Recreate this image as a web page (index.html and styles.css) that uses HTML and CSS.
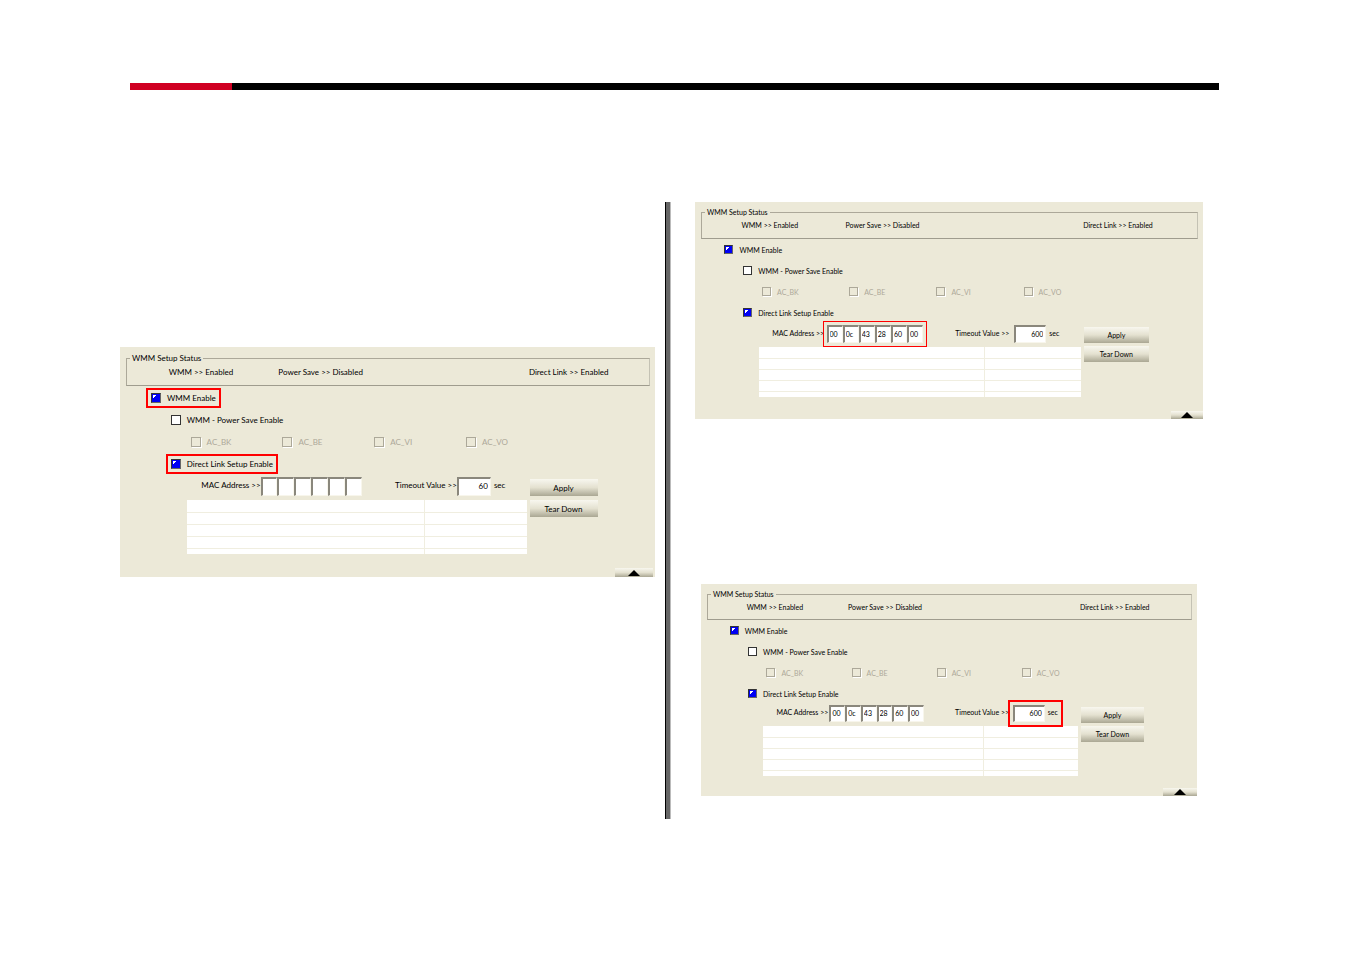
FILE: index.html
```
<!DOCTYPE html>
<html lang="en">
<head>
    <meta charset="UTF-8">
    <meta name="viewport" content="width=device-width, initial-scale=1.0">
    <title>WMM Setup</title>
    <link rel="stylesheet" href="styles.css">
</head>
<body>

    <header class="page-rule"></header>

    <main class="columns">

      <!-- Left column -->
      <section class="column column-left">
        <form class="panel panel-large">
          <fieldset class="status">
            <legend>WMM Setup Status</legend>
            <div class="status-row">
              <span>WMM &gt;&gt; Enabled</span>
              <span>Power Save &gt;&gt; Disabled</span>
              <span>Direct Link &gt;&gt; Enabled</span>
            </div>
          </fieldset>

          <div class="row level-1"><label class="check highlight"><input type="checkbox" checked>WMM Enable</label></div>
          <div class="row level-2"><label class="check"><input type="checkbox">WMM - Power Save Enable</label></div>
          <div class="row level-3">
            <label class="check"><input type="checkbox" disabled>AC_BK</label>
            <label class="check"><input type="checkbox" disabled>AC_BE</label>
            <label class="check"><input type="checkbox" disabled>AC_VI</label>
            <label class="check"><input type="checkbox" disabled>AC_VO</label>
          </div>
          <div class="row level-2"><label class="check highlight"><input type="checkbox" checked>Direct Link Setup Enable</label></div>

          <div class="direct-link">
            <div class="link-main">
              <div class="link-fields">
                <label for="mac-a">MAC Address &gt;&gt;</label>
                <div class="mac">
                  <input type="text" id="mac-a" maxlength="2">
                  <input type="text" aria-label="MAC byte 2" maxlength="2">
                  <input type="text" aria-label="MAC byte 3" maxlength="2">
                  <input type="text" aria-label="MAC byte 4" maxlength="2">
                  <input type="text" aria-label="MAC byte 5" maxlength="2">
                  <input type="text" aria-label="MAC byte 6" maxlength="2">
                </div>
                <label for="timeout-a">Timeout Value &gt;&gt;</label>
                <div class="timeout"><input type="text" id="timeout-a" value="60"><span>sec</span></div>
              </div>
              <table class="links">
                <tr><td></td><td></td></tr>
                <tr><td></td><td></td></tr>
                <tr><td></td><td></td></tr>
                <tr><td></td><td></td></tr>
                <tr><td></td><td></td></tr>
              </table>
            </div>
            <div class="actions">
              <button type="button">Apply</button>
              <button type="button">Tear Down</button>
            </div>
          </div>

          <button type="button" class="collapse" aria-label="Collapse"><svg width="12" height="6" viewBox="0 0 12 6"><path d="M6 0l6 6H0z"/></svg></button>
        </form>
      </section>

      <div class="divider"></div>

      <!-- Right column -->
      <section class="column column-right">
        <form class="panel panel-medium">
          <fieldset class="status">
            <legend>WMM Setup Status</legend>
            <div class="status-row">
              <span>WMM &gt;&gt; Enabled</span>
              <span>Power Save &gt;&gt; Disabled</span>
              <span>Direct Link &gt;&gt; Enabled</span>
            </div>
          </fieldset>

          <div class="row level-1"><label class="check"><input type="checkbox" checked>WMM Enable</label></div>
          <div class="row level-2"><label class="check"><input type="checkbox">WMM - Power Save Enable</label></div>
          <div class="row level-3">
            <label class="check"><input type="checkbox" disabled>AC_BK</label>
            <label class="check"><input type="checkbox" disabled>AC_BE</label>
            <label class="check"><input type="checkbox" disabled>AC_VI</label>
            <label class="check"><input type="checkbox" disabled>AC_VO</label>
          </div>
          <div class="row level-2"><label class="check"><input type="checkbox" checked>Direct Link Setup Enable</label></div>

          <div class="direct-link">
            <div class="link-main">
              <div class="link-fields">
                <label for="mac-b">MAC Address &gt;&gt;</label>
                <div class="mac highlight">
                  <input type="text" id="mac-b" maxlength="2" value="00">
                  <input type="text" aria-label="MAC byte 2" maxlength="2" value="0c">
                  <input type="text" aria-label="MAC byte 3" maxlength="2" value="43">
                  <input type="text" aria-label="MAC byte 4" maxlength="2" value="28">
                  <input type="text" aria-label="MAC byte 5" maxlength="2" value="60">
                  <input type="text" aria-label="MAC byte 6" maxlength="2" value="00">
                </div>
                <label for="timeout-b">Timeout Value &gt;&gt;</label>
                <div class="timeout"><input type="text" id="timeout-b" value="600"><span>sec</span></div>
              </div>
              <table class="links">
                <tr><td></td><td></td></tr>
                <tr><td></td><td></td></tr>
                <tr><td></td><td></td></tr>
                <tr><td></td><td></td></tr>
                <tr><td></td><td></td></tr>
              </table>
            </div>
            <div class="actions">
              <button type="button">Apply</button>
              <button type="button">Tear Down</button>
            </div>
          </div>

          <button type="button" class="collapse" aria-label="Collapse"><svg width="12" height="6" viewBox="0 0 12 6"><path d="M6 0l6 6H0z"/></svg></button>
        </form>

        <form class="panel panel-small">
          <fieldset class="status">
            <legend>WMM Setup Status</legend>
            <div class="status-row">
              <span>WMM &gt;&gt; Enabled</span>
              <span>Power Save &gt;&gt; Disabled</span>
              <span>Direct Link &gt;&gt; Enabled</span>
            </div>
          </fieldset>

          <div class="row level-1"><label class="check"><input type="checkbox" checked>WMM Enable</label></div>
          <div class="row level-2"><label class="check"><input type="checkbox">WMM - Power Save Enable</label></div>
          <div class="row level-3">
            <label class="check"><input type="checkbox" disabled>AC_BK</label>
            <label class="check"><input type="checkbox" disabled>AC_BE</label>
            <label class="check"><input type="checkbox" disabled>AC_VI</label>
            <label class="check"><input type="checkbox" disabled>AC_VO</label>
          </div>
          <div class="row level-2"><label class="check"><input type="checkbox" checked>Direct Link Setup Enable</label></div>

          <div class="direct-link">
            <div class="link-main">
              <div class="link-fields">
                <label for="mac-c">MAC Address &gt;&gt;</label>
                <div class="mac">
                  <input type="text" id="mac-c" maxlength="2" value="00">
                  <input type="text" aria-label="MAC byte 2" maxlength="2" value="0c">
                  <input type="text" aria-label="MAC byte 3" maxlength="2" value="43">
                  <input type="text" aria-label="MAC byte 4" maxlength="2" value="28">
                  <input type="text" aria-label="MAC byte 5" maxlength="2" value="60">
                  <input type="text" aria-label="MAC byte 6" maxlength="2" value="00">
                </div>
                <label for="timeout-c">Timeout Value &gt;&gt;</label>
                <div class="timeout highlight"><input type="text" id="timeout-c" value="600"><span>sec</span></div>
              </div>
              <table class="links">
                <tr><td></td><td></td></tr>
                <tr><td></td><td></td></tr>
                <tr><td></td><td></td></tr>
                <tr><td></td><td></td></tr>
                <tr><td></td><td></td></tr>
              </table>
            </div>
            <div class="actions">
              <button type="button">Apply</button>
              <button type="button">Tear Down</button>
            </div>
          </div>

          <button type="button" class="collapse" aria-label="Collapse"><svg width="12" height="6" viewBox="0 0 12 6"><path d="M6 0l6 6H0z"/></svg></button>
        </form>
      </section>

    </main>

</body>
</html>
```

FILE: styles.css
```
* {
  box-sizing: border-box;
}

body {
  margin: 0;
  padding: 83px 0 0;
  background-color: white;
  color: black;
  font-family: Lato, "Liberation Sans", sans-serif;
}

.page-rule {
  height: 7px;
  margin: 0 131px 0 130px;
  background: linear-gradient(to right, #d00022 102px, black 102px);
}

.columns {
  display: grid;
  grid-template-columns: 535fr 40px 508fr;
  margin: 112px 147px 0 120px;
}

.column-left {
  padding-top: 145px;
}

.column-right {
  padding-bottom: 23px;
}

.divider {
  width: 6px;
  margin-left: 10px;
  background-color: #666;
  border-left: 1px solid black;
  border-right: 1px solid #bbb;
}

/* Panels: same form at three sizes */
.panel {
  background-color: #ece9d8;
  padding: 5px 0 0;
  font-size: 7px;
  line-height: 10px;
  white-space: nowrap;
}

.panel-large {
  --status: 18px;
  --after-status: 1px;
  --row: 22px;
  --box: 10px;
  --lead: 2px;
  --field: 19px;
  --time: 34px;
  --button: 17px;
  --button-gap: 4px;
  --line: 12px;
  --foot: 14px;
  --collapse: 38px;
  --mark: 2px;
  padding-top: 6px;
  font-size: 8px;
}

.panel-medium {
  --status: 17px;
  --after-status: 0;
  --row: 21px;
  --box: 9px;
  --lead: 2px;
  --field: 18px;
  --time: 32px;
  --button: 16px;
  --button-gap: 3px;
  --line: 11px;
  --foot: 14px;
  --collapse: 32px;
  --mark: 1px;
}

.panel-small {
  --status: 16px;
  --after-status: 0;
  --row: 21px;
  --box: 9px;
  --lead: 1px;
  --field: 17px;
  --time: 32px;
  --button: 16px;
  --button-gap: 3px;
  --line: 11px;
  --foot: 12px;
  --collapse: 34px;
  --mark: 2px;
  margin: 165px 6px 0;
}

.status {
  min-width: 0;
  margin: 0 5px var(--after-status) 6px;
  padding: 0 0 4px;
  border: 1px solid #aca899;
  border-right-color: #c4c2b4;
  border-bottom-color: #9f9c8e;
}

.status legend {
  margin-left: 3px;
  padding: 0 2px;
}

.status-row {
  display: grid;
  grid-template-columns: 21fr 48fr 23fr;
  margin-left: 8%;
  line-height: var(--status);
}

.row {
  display: flex;
  align-items: center;
  height: var(--row);
}

.level-1 {
  margin-left: 5.8%;
}

.level-2 {
  margin-left: 9.5%;
}

.level-3 {
  display: grid;
  grid-template-columns: repeat(5, 1fr);
  margin: 0 1% 0 13.2%;
  color: #aca899;
}

.check {
  display: inline-flex;
  align-items: center;
  gap: 6px;
}

.check input {
  appearance: none;
  width: var(--box);
  height: var(--box);
  margin: 0;
  background-color: white;
  border: 1px solid #333;
}

.check input:checked {
  background: linear-gradient(135deg, white 50%, #0000f4 50%) 1px 1px / 4px 4px no-repeat #0000f4;
  border-color: #333 #666 #666 #333;
}

.check input:disabled {
  background-color: #ece9d8;
  border: 1px solid #aca899;
  box-shadow: 1px 1px white;
}

.highlight {
  outline: var(--mark) solid #f00;
  outline-offset: 3px;
}

.direct-link {
  display: flex;
  padding-top: var(--lead);
}

.link-main {
  width: 76%;
}

.link-fields {
  display: grid;
  grid-template-columns: 57fr 135fr 62fr 70fr;
  align-items: center;
  margin-left: 20%;
}

.link-fields label,
.timeout span {
  padding-bottom: 3px;
}

.mac {
  display: flex;
  width: 75%;
}

.mac input,
.timeout input {
  height: var(--field);
  padding: 0 2px 2px;
  border: 1px solid #f8f6ec;
  border-top: 2px solid #8a877c;
  border-left: 2px solid #8a877c;
  border-radius: 0;
  background-color: white;
  font: inherit;
}

.mac input {
  flex: 1;
  width: 0;
  padding: 0 1px 2px;
}

.timeout {
  display: flex;
  align-items: center;
  justify-self: start;
  gap: 3px;
}

.timeout input {
  width: var(--time);
  text-align: right;
}

.links {
  width: 83.5%;
  margin: 4px 0 0 auto;
  border-collapse: collapse;
  table-layout: fixed;
  background-color: white;
}

.links td {
  height: var(--line);
  padding: 0;
  border-bottom: 1px solid #f0eee0;
}

.links td:first-child {
  width: 70%;
  border-right: 1px solid #f0eee0;
}

.links tr:last-child td {
  height: 6px;
  border-bottom: 0;
}

.actions {
  display: flex;
  flex-direction: column;
  gap: var(--button-gap);
  width: 12.7%;
  margin-left: 3px;
  padding-top: 2px;
}

.actions button,
.collapse {
  height: var(--button);
  padding: 0;
  border: 0;
  background: linear-gradient(#f8f7ef, #e4e1d0 50%, #aaa793);
  font: inherit;
}

.collapse {
  display: block;
  width: var(--collapse);
  height: 8px;
  margin: var(--foot) 0 0 auto;
}

.panel-large .collapse {
  height: 9px;
  margin-right: 2px;
}

.collapse svg {
  display: block;
  margin: 0 auto;
}
```
